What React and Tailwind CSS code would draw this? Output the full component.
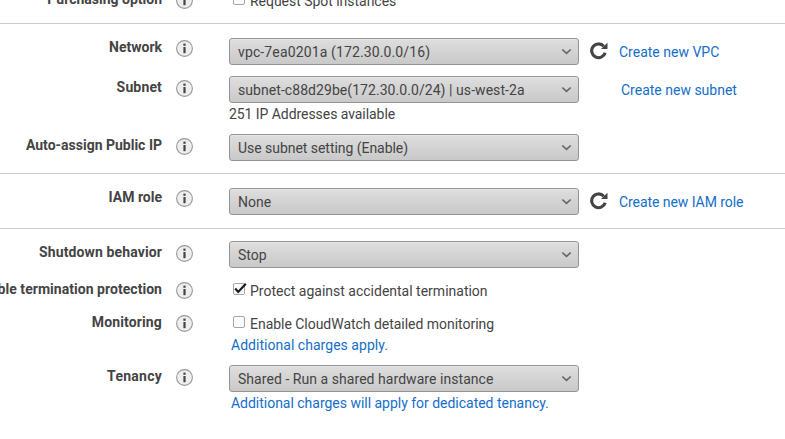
import React from "react";

function InfoIcon() {
  return (
    <svg className="mt-[3px] ml-[14px] size-[17px] shrink-0" viewBox="0 0 17 17">
      <circle cx="8.5" cy="8.5" r="7.9" fill="#eeeeee" stroke="#999999" strokeWidth="1.1" />
      <rect x="7.4" y="3.6" width="2.2" height="2.2" fill="#444444" />
      <rect x="7.4" y="7" width="2.2" height="6.2" fill="#444444" />
    </svg>
  );
}

function RefreshIcon() {
  return (
    <svg className="-mt-[2px] ml-[11px] size-[18px] shrink-0" viewBox="0 0 18 18">
      <path d="M13.8 4.3 A6.9 6.9 0 1 0 15.2 10.8" fill="none" stroke="#444444" strokeWidth="3.1" />
      <path d="M17.5 0.7 V7.1 H11 Z" fill="#444444" />
    </svg>
  );
}

function Row({ label, labelClass = "", className, children }) {
  return (
    <div className={`flex items-start ${className}`}>
      <div className={`flex w-[162px] shrink-0 justify-end leading-5 font-bold whitespace-nowrap ${labelClass}`}>{label}</div>
      <InfoIcon />
      <div className="ml-9 min-w-0 flex-1">{children}</div>
    </div>
  );
}

function Select({ textClass = "", children }) {
  return (
    <div className="flex h-[27px] w-[350px] shrink-0 items-center justify-between rounded-[3px] border border-[#949494] bg-linear-to-b from-[#dedede] to-[#c9c9c9] pr-[6px] pl-2 shadow-[inset_0_1px_0_#e6e6e6]">
      <span className={`pt-px leading-5 whitespace-nowrap ${textClass}`}>{children}</span>
      <svg className="size-[11px]" viewBox="0 0 11 11">
        <path d="M1.3 3.5 L5.5 7.4 L9.7 3.5" fill="none" stroke="#666666" strokeWidth="1.7" />
      </svg>
    </div>
  );
}

function Checkbox({ checked, textClass = "", children }) {
  return (
    <div className="flex items-start pl-1">
      <svg className="mt-1 h-[12px] w-[14px] shrink-0 overflow-visible" viewBox="0 0 14 12">
        <rect x="0.5" y="0.5" width="11" height="11" rx="1.5" fill="#fbfbfb" stroke="#a6a6a6" />
        {checked && <path d="M2.2 5.5 L5.2 9 L12.8 0.8" fill="none" stroke="#1a1a1a" strokeWidth="2.1" />}
      </svg>
      <span className={`mt-[2px] ml-[3px] leading-5 ${textClass}`}>{children}</span>
    </div>
  );
}

function Link({ className, children }) {
  return (
    <a href="#" className={`leading-5 whitespace-nowrap text-[#146eca] ${className}`}>
      {children}
    </a>
  );
}

export default function App() {
  return (
    <div className="h-[439px] w-[785px] overflow-hidden bg-white font-['Roboto',sans-serif] text-[14px] text-[#444444]">
      <section className="h-6 overflow-hidden border-b border-[#cccccc]">
        <Row label="Purchasing option" className="-mt-[11px] h-[34px]">
          <Checkbox textClass="tracking-[-0.03px]">Request Spot instances</Checkbox>
        </Row>
      </section>

      <section className="border-b border-[#cccccc] pt-[13px]">
        <Row label="Network" className="h-10">
          <div className="mt-px flex items-center">
            <Select textClass="tracking-[0.13px]">vpc-7ea0201a (172.30.0.0/16)</Select>
            <RefreshIcon />
            <Link className="ml-[11px]">Create new VPC</Link>
          </div>
        </Row>
        <Row label="Subnet" labelClass="tracking-[0.15px]" className="h-[58px]">
          <div className="-mt-px flex items-center">
            <Select textClass="tracking-[0.06px]">subnet-c88d29be(172.30.0.0/24) | us-west-2a</Select>
            <Link className="ml-[42px]">Create new subnet</Link>
          </div>
          <p className="mt-px leading-5 tracking-[-0.06px]">251 IP Addresses available</p>
        </Row>
        <Row label="Auto-assign Public IP" className="h-[38px]">
          <div className="-mt-px">
            <Select textClass="tracking-[-0.04px]">Use subnet setting (Enable)</Select>
          </div>
        </Row>
      </section>

      <section className="border-b border-[#cccccc] pt-[13px]">
        <Row label="IAM role" className="h-[41px]">
          <div className="mt-px flex items-center">
            <Select>None</Select>
            <RefreshIcon />
            <Link className="ml-[11px] tracking-[-0.06px]">Create new IAM role</Link>
          </div>
        </Row>
      </section>

      <section className="pt-[13px]">
        <Row label="Shutdown behavior" labelClass="tracking-[0.12px]" className="h-[37px]">
          <div className="-mt-px">
            <Select>Stop</Select>
          </div>
        </Row>
        <Row label="Enable termination protection" labelClass="tracking-[0.04px]" className="h-[33px]">
          <Checkbox checked>Protect against accidental termination</Checkbox>
        </Row>
        <Row label="Monitoring" labelClass="tracking-[0.14px]" className="h-[54px]">
          <Checkbox textClass="tracking-[-0.03px]">Enable CloudWatch detailed monitoring</Checkbox>
          <Link className="mt-px ml-[2px] block tracking-[0.03px]">Additional charges apply.</Link>
        </Row>
        <Row label="Tenancy" labelClass="tracking-[0.25px]" className="h-[60px]">
          <div className="-mt-px">
            <Select textClass="tracking-[0.05px]">Shared - Run a shared hardware instance</Select>
          </div>
          <Link className="mt-px ml-[2px] block tracking-[-0.02px]">Additional charges will apply for dedicated tenancy.</Link>
        </Row>
      </section>
    </div>
  );
}
